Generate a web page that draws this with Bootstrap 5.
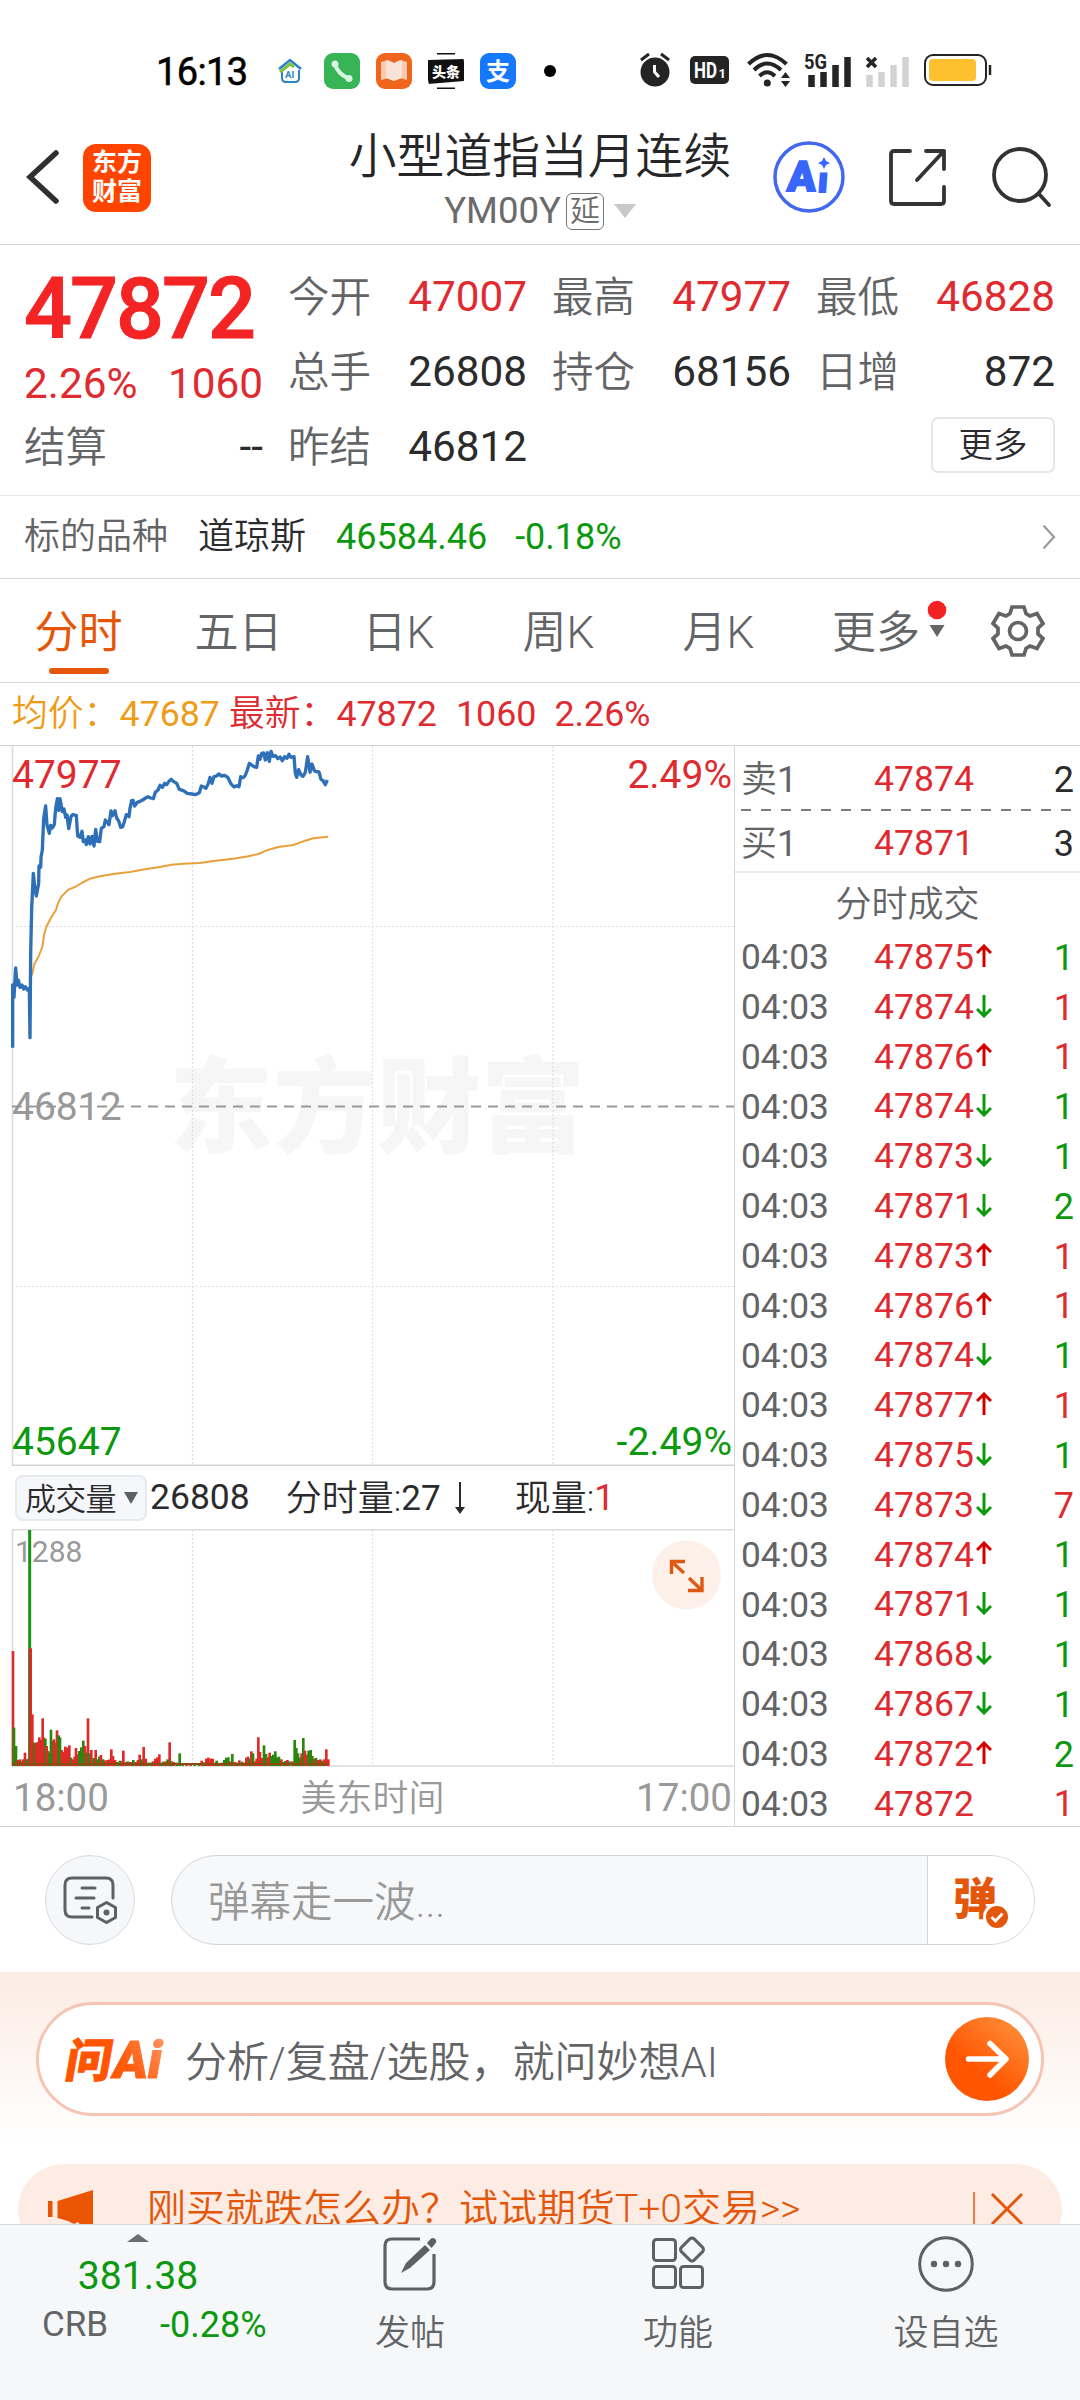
<!DOCTYPE html>
<html lang="zh-CN">
<head>
<meta charset="utf-8">
<meta name="viewport" content="width=device-width, initial-scale=1">
<title>小型道指当月连续</title>
<link href="https://cdn.jsdelivr.net/npm/bootstrap@5.3.0/dist/css/bootstrap.min.css" rel="stylesheet">
<style>
  :root{--up:#df2a30;--down:#0c980f;--ink:#2b2b2d;--sub:#636466;--orange:#e4570b;--rule:#dadada}
  body{width:1080px;height:2400px;overflow:hidden;background:#fff;color:var(--ink);font-family:Roboto,"Noto Sans CJK SC",sans-serif;line-height:1;font-size:36px}
  svg{display:block;flex:none}
  .up{color:var(--up)}.down{color:var(--down)}.sub{color:var(--sub)}
  .cn{font-weight:350;padding-top:2px}
  .nowrap{white-space:nowrap}
  .statusbar{height:140px;padding:2px 0 0 156px}
  .clock{font-size:38px;font-weight:400;color:#000;width:122px;letter-spacing:-.6px;-webkit-text-stroke:.5px #000}
  .app-tile{width:36px;height:36px;border-radius:9px;margin-right:16px;overflow:hidden}
  .topbar{height:105px;border-bottom:1px solid #d4d4d4;padding:0 26px 0 26px}
  .brand{width:68px;height:68px;border-radius:13px;background:#ff4400;color:#fff;font-weight:700;font-size:25px;line-height:29px;padding-top:4px;margin-left:23px}
  .title-col{width:450px;margin-left:164px}
  .title-main{font-size:47.8px;line-height:56px;margin-top:-11px;color:#262628;font-weight:350}
  .title-sub{font-size:36.5px;height:38px;color:#6b6b6b;margin-top:7px}
  .delay{font-size:30px;width:38px;height:37px;border:1.5px solid #777;border-radius:6px;margin-left:5px;font-weight:350}
  .quote{height:251px;padding:14px 24px 0;border-bottom:1px solid #e6e6e6;display:grid;grid-template-columns:repeat(4,239px);column-gap:25px;grid-template-rows:75px 75px 75px;font-size:42.3px}
  .q-cell{display:flex;justify-content:space-between;align-items:center;white-space:nowrap;padding-top:1px}
  .q-cell .cn{font-size:41.5px;color:var(--sub)}
  .q-price{font-size:84.5px;font-weight:500;color:#f42425;letter-spacing:-2px;padding-top:27px;-webkit-text-stroke:1px #f42425}
  .more-btn{width:124px;height:56px;border:2px solid #e6e6e6;border-radius:7px;font-size:34.5px;padding:0;color:var(--ink);line-height:48px;font-weight:350;margin-top:-5px}
  .under{height:83px;padding:0 24px;border-bottom:1px solid #d6d6da}
  .under .cn{padding-top:0}
  .tabs{height:104px;border-bottom:1px solid #d6d6da;font-size:44px}
  .tab-item{width:160px;height:103px;position:relative;color:var(--sub);font-weight:350;padding:5px 3px 0 0}
  .tab-item.on{color:var(--orange);font-weight:400}
  .tab-item.on::after{content:"";position:absolute;bottom:8px;left:49px;width:60px;height:6px;border-radius:3px;background:var(--orange)}
  .tab-more{position:absolute;right:13px;top:21px}
  .legend-row{height:63px;padding:2px 0 0 12px;border-bottom:1px solid #d2d2d2;white-space:pre;font-size:35.8px}
  .left-col{width:734px}
  .right-col{width:346px;border-left:1.5px solid #d8d8d8;height:1080px;padding:1px 6px 0 6px}
  .market{border-bottom:1px solid #d2d2d2;height:1081px}
  .volhead{height:63px;padding:1px 0 0 15px}
  .vol-select{width:132px;height:46px;border:2px solid #e6e9ee;border-radius:8px;background:#f6f7fa;font-size:31px;padding:2px 7px 0 8px;margin-right:3px;letter-spacing:-.7px}
  .axis{height:59px;font-size:38.5px;color:#999;padding:3px 2px 0 13px}
  .book{height:62px}
  .tick{height:49.8px}
  .t1{width:133px}.t2{width:99px;white-space:nowrap;font-size:35.6px}.tick .t1{font-size:35.3px}
  .tick svg{margin:-4px 0 0 3px}
  .danmu{height:145px;padding:0 45px}
  .round-btn{width:90px;height:90px;border:1.5px solid #d9dbde;background:#f6f7fa}
  .dm-field{width:864px;height:90px;border:1.5px solid #d3d5d9;margin-left:36px;overflow:hidden;background:#f6f8fa}
  .dm-text{font-size:41.5px;color:#999;padding:6px 0 0 36px;font-weight:350}
  .dm-side{width:107px;border-left:1.5px solid #d3d5d9;background:#fff}
  .dm-glyph{font-size:44px;font-weight:900;color:var(--orange);line-height:44px}
  .ask{height:192px;padding:30px 36px 0;background:linear-gradient(#fcece3,#fdf2ec 30%,#fff 88%)}
  .ask-pill{height:114px;border:3px solid #f6c4b3;border-radius:57px;background:#fff;padding:0 12px 0 27px}
  .ask-logo{width:97px;height:48px;overflow:visible}
  .ask-text{font-size:42px;line-height:52px;color:var(--sub);margin:7px 0 0 22px;font-weight:350}
  .tip-clip{height:60px;padding:0 18px;overflow:hidden}
  .tip{height:92px;border-radius:46px;background:#fcece4;color:var(--orange);padding:0 39px 0 30px}
  .tip-text{font-size:39px;margin:-2px 0 0 53px;font-weight:350}
  .footbar{height:176px;background:#f6f7f9;border-top:1.5px solid #d4d6d8}
  .foot-item{width:268px;padding-top:11px;font-size:35px;color:var(--sub)}
  .foot-item .cn{margin-top:22px;line-height:36px}
  .foot-index{width:276px;padding-top:9px}
</style>
</head>
<body>
<div class="statusbar d-flex align-items-start">
  <div class="clock" style="margin-top:51px">16:13</div>
  <div class="d-flex align-items-center" style="margin-top:51px">
    <svg width="24" height="26" viewBox="0 0 24 26" style="margin-right:22px"><path d="M4 12V20Q4 24 8 24H17Q21 24 21 20V12" fill="none" stroke="#2a83c4" stroke-width="2"/><path d="M1 11L12 2L23 11" fill="none" stroke="#2a7fc9" stroke-width="2.5"/><path d="M2 14L12 6L16 9" fill="none" stroke="#7cc242" stroke-width="3"/><text x="7" y="20" font-size="9.500" font-weight="700" fill="#2a83c4">AI</text></svg>
    <svg class="app-tile" viewBox="0 0 36 36"><rect width="36" height="36" fill="#37b456"/><path d="M11 11Q13 20 25 26" fill="none" stroke="#d9f5df" stroke-width="4"/><circle cx="11" cy="11" r="3.500" fill="#d9f5df"/><circle cx="25" cy="25.500" r="3.500" fill="#d9f5df"/></svg>
    <svg class="app-tile" viewBox="0 0 36 36"><rect width="36" height="36" fill="#f0651d"/><path d="M5 9L12 7L18 10L24 7L31 9V27L24 25L18 28L12 25L5 27Z" fill="#fbc9ab"/><path d="M10 7L18 10V28L10 25ZM26 7L18 10V28L26 25Z" fill="#f9e3d9"/></svg>
    <svg class="app-tile" viewBox="0 0 36 36"><rect width="36" height="36" fill="#fff"/><path d="M0 7L36 6V28L0 31ZM9 0H27V1.500H9ZM9 34.500H27V36H9Z" fill="#111"/><text x="4" y="24" font-size="14" font-weight="900" fill="#fff">头条</text></svg>
    <svg class="app-tile" viewBox="0 0 36 36" style="margin-right:28px"><rect width="36" height="36" fill="#1677ff"/><text x="6" y="26.500" font-size="24" font-weight="700" fill="#fff">支</text></svg>
    <svg width="12" height="12" viewBox="0 0 12 12"><circle cx="6" cy="6" r="6"/></svg>
  </div>
  <div class="d-flex align-items-center" style="margin:50px 0 0 84px">
    <svg width="30" height="36" viewBox="0 0 30 36" style="margin-right:20px"><circle cx="15" cy="20" r="14.500" fill="#242424"/><path d="M1 8L9 2M29 8L21 2" stroke="#242424" stroke-width="3"/><path d="M14.500 13V20L19 25" fill="none" stroke="#fff" stroke-width="3"/></svg>
    <svg width="39" height="28" viewBox="0 0 39 28" style="margin-right:18px"><rect width="39" height="28" rx="5" fill="#242424"/><text x="4" y="22" font-size="22" font-weight="700" fill="#fff" textLength="23" lengthAdjust="spacingAndGlyphs">HD</text><text x="28.500" y="22" font-size="13" font-weight="700" fill="#fff">1</text></svg>
    <svg width="44" height="36" viewBox="0 0 44 36" style="margin-right:14px"><g fill="none" stroke="#242424" stroke-width="4"><path d="M1.500 12Q20-6 39.500 12"/><path d="M7 18Q20 5 34 18"/><path d="M12.500 24Q20 16.500 28 24"/></g><circle cx="20.300" cy="31" r="3.500" fill="#242424"/><path d="M34 26L38.500 20L43 26ZM34 29H43L38.500 35Z" fill="#242424"/></svg>
    <svg width="46" height="36" viewBox="0 0 46 36" style="margin-right:15px;overflow:visible"><text x="-1" y="17" font-size="20" font-weight="700" fill="#242424" textLength="23" lengthAdjust="spacingAndGlyphs">5G</text><path d="M6.500 35V23M18.500 35V20M30.500 35V13M42.500 35V5" stroke="#242424" stroke-width="6.500"/></svg>
    <svg width="43" height="36" viewBox="0 0 43 36" style="margin-right:15px"><path d="M1 6L10 15M10 6L1 15" stroke="#242424" stroke-width="3.500"/><path d="M3.500 35V23M15.500 35V20M27.500 35V13M39.500 35V5" stroke="#d3d3d3" stroke-width="6.500"/></svg>
    <svg width="68" height="32" viewBox="0 0 68 32"><rect x="1" y="1" width="61" height="30" rx="8" fill="#fff" stroke="#242424" stroke-width="2"/><rect x="5" y="5" width="47" height="22" rx="4" fill="#fec02f"/><path d="M66 11V21" stroke="#242424" stroke-width="2.500"/></svg>
  </div>
</div>

<header class="topbar d-flex align-items-start">
  <svg width="34" height="60" viewBox="0 0 34 60" style="margin-top:7px"><path d="M30 6L4 30L30 54" fill="none" stroke="#303030" stroke-width="5.500" stroke-linecap="round"/></svg>
  <div class="brand text-center" style="margin-top:4px">东方<br>财富</div>
  <div class="title-col d-flex flex-column align-items-center">
    <div class="title-main nowrap">小型道指当月连续</div>
    <div class="title-sub d-flex align-items-center"><span>YM00Y</span><span class="delay d-flex align-items-center justify-content-center">延</span>
      <svg width="22" height="14" viewBox="0 0 22 14" style="margin-left:10px"><path d="M0 0H22L11 14Z" fill="#c8c8c8"/></svg></div>
  </div>
  <svg width="74" height="74" viewBox="0 0 74 74" style="margin-left:7px"><circle cx="37" cy="37" r="34" fill="#fff" stroke="#4268f0" stroke-width="3.500"/><g fill="#3866fb" stroke="#3866fb" stroke-width="1.800" font-weight="900"><text x="18" y="51" font-size="42" transform="skewX(-4)">A</text><text x="49" y="52" font-size="35" transform="skewX(-4)">ı</text></g><path d="M52 17L54 21L58 23L54 25L52 29L50 25L46 23L50 21Z" fill="#3866fb"/></svg>
  <svg width="62" height="62" viewBox="0 0 62 62" style="margin:7px 0 0 42px"><g fill="none" stroke="#333" stroke-width="3.800" stroke-linecap="round" stroke-linejoin="round"><path d="M22 4H6Q3 4 3 7V54Q3 57 6 57H53Q56 57 56 54V40"/><path d="M38 4H56V22M56 4L29 33"/></g></svg>
  <svg width="62" height="62" viewBox="0 0 62 62" style="margin:7px 0 0 41px"><g fill="none" stroke="#333" stroke-width="3.800" stroke-linecap="round"><circle cx="29" cy="28" r="26"/><path d="M48 47L58 58"/></g></svg>
</header>

<section class="quote">
  <div class="q-cell q-price">47872</div>
  <div class="q-cell"><span class="cn">今开</span><span class="up">47007</span></div>
  <div class="q-cell"><span class="cn">最高</span><span class="up">47977</span></div>
  <div class="q-cell"><span class="cn">最低</span><span class="up">46828</span></div>
  <div class="q-cell up" style="padding-top:26px"><span>2.26%</span><span>1060</span></div>
  <div class="q-cell"><span class="cn">总手</span><span>26808</span></div>
  <div class="q-cell"><span class="cn">持仓</span><span>68156</span></div>
  <div class="q-cell"><span class="cn">日增</span><span>872</span></div>
  <div class="q-cell"><span class="cn">结算</span><span>--</span></div>
  <div class="q-cell"><span class="cn">昨结</span><span>46812</span></div>
  <div></div>
  <div class="q-cell justify-content-end"><button class="btn more-btn">更多</button></div>
</section>

<section class="under d-flex align-items-center">
  <span class="cn sub">标的品种</span><span class="cn" style="margin-left:30px">道琼斯</span><span class="down" style="margin-left:30px">46584.46</span><span class="down" style="margin-left:28px">-0.18%</span>
  <svg class="ms-auto" width="14" height="26" viewBox="0 0 14 26"><path d="M1.500 1.500L12 13L1.500 24.500" fill="none" stroke="#999" stroke-width="2.200"/></svg>
</section>

<nav class="tabs d-flex align-items-center">
  <div class="tab-item on d-flex align-items-center justify-content-center">分时</div>
  <div class="tab-item d-flex align-items-center justify-content-center">五日</div>
  <div class="tab-item d-flex align-items-center justify-content-center">日K</div>
  <div class="tab-item d-flex align-items-center justify-content-center">周K</div>
  <div class="tab-item d-flex align-items-center justify-content-center">月K</div>
  <div class="tab-item d-flex align-items-center justify-content-center"><span style="margin-right:5px">更多</span>
    <svg class="tab-more" width="20" height="40" viewBox="0 0 20 40"><circle cx="10" cy="10" r="9.300" fill="#f32324"/><path d="M2.500 25H17.500L10 37Z" fill="#636466"/></svg></div>
  <svg width="54" height="54" viewBox="-27 -27 54 54" style="margin-left:31px"><path d="M-6-24H6L8-17.500L12-15L19-17.500L25-7.500L20-3V3L25 7.500L19 17.500L12 15L8 17.500L6 24H-6L-8 17.500L-12 15L-19 17.500L-25 7.500L-20 3V-3L-25-7.500L-19-17.500L-12-15L-8-17.500Z" fill="none" stroke="#636466" stroke-width="3.700"/><circle r="8.500" fill="none" stroke="#636466" stroke-width="3.700"/></svg>
</nav>

<div class="legend-row d-flex align-items-center"><span style="color:#ee9c18"><span class="cn">均价：</span>47687</span><span class="up" style="margin-left:9px"><span class="cn">最新：</span>47872</span><span class="up" style="margin-left:19px">1060</span><span class="up" style="margin-left:18px">2.26%</span></div>

<main class="market d-flex">
  <div class="left-col">
    <svg width="734" height="720" viewBox="0 746 734 720">
      <text x="169" y="1145" font-size="104" font-weight="900" fill="#f6f6f6">东方财富</text>
      <g stroke="#d4d4d4" stroke-width="1.200" stroke-dasharray="1.500 2.500"><path d="M192.500 746V1465M372.500 746V1465M553 746V1465M12 926.500H735M12 1286.500H735"/></g>
      <path d="M12.500 746V1466" stroke="#d9d9df" stroke-width="1.500"/>
      <path d="M12 1465.300H735" stroke="#d2d2d2" stroke-width="1.500"/>
      <path d="M12 1106.500H735" stroke="#999" stroke-width="2" stroke-dasharray="10 7"/>
      <g font-size="39">
        <text x="12" y="788" fill="#df2a30">47977</text>
        <text x="732" y="788" fill="#df2a30" text-anchor="end">2.49%</text>
        <text x="12" y="1120" fill="#999">46812</text>
        <text x="12" y="1455" fill="#0c980f">45647</text>
        <text x="732" y="1455" fill="#0c980f" text-anchor="end">-2.49%</text>
      </g>
      <g transform="translate(0 740) scale(.33333)" fill="none" stroke-linejoin="round">
        <path stroke="#e9a03c" stroke-width="6" d="M96 706L103 672L115 651L127 621L132 585L140 558L155 530L168 510L174 490L184 470L205 449L225 441L245 429L270 416L300 409L345 401L390 396L435 388L480 381L515 374L550 371L600 369L640 363L700 356L745 349L775 342L800 331L835 321L880 315L910 304L940 295L984 290"/>
        <path stroke="#2e70b8" stroke-width="10" d="M38 923V735L42 772L47 684L51 735L55 720L60 742L66 735L71 747L76 740L82 750L88 745L90 893L92 640L95 505L100 400L105 450L109 468L116 430L117 378L122 382L123 352L127 330L131 235L137 198L141 255L148 280L152 256L157 264L163 253L167 205L172 176L176 212L180 176L187 215L192 207L197 232L201 225L206 266L213 230L218 224L229 226L233 288L240 292L246 274L250 305L256 300L259 314L265 290L270 312L276 289L282 318L287 268L292 304L299 305L304 265L312 260L316 240L322 247L327 254L333 213L338 227L345 212L350 234L356 243L362 262L368 260L373 245L379 224L387 230L390 205L395 182L399 181L404 198L412 187L420 184L428 180L437 174L444 170L452 174L460 176L466 157L474 150L480 136L487 142L494 130L500 134L507 124L514 118L520 124L530 130L538 148L550 152L562 160L576 162L586 164L598 158L604 138L612 141L618 145L625 130L630 112L636 130L642 110L650 108L656 102L665 108L674 106L684 113L692 130L702 141L710 137L717 140L722 110L729 113L735 108L742 90L748 70L755 75L762 80L770 82L775 48L780 58L785 40L791 39L796 60L802 38L808 64L813 34L819 49L827 47L833 56L840 51L847 62L854 50L861 55L867 43L873 52L882 50L886 100L890 112L896 89L903 105L909 109L916 97L923 50L930 97L936 72L943 92L950 95L957 96L963 118L969 122L976 134L982 120"/>
      </g>
    </svg>
    <div class="volhead d-flex align-items-center">
      <span class="vol-select d-flex align-items-center justify-content-between cn">成交量<svg width="14" height="12" viewBox="0 0 14 12" style="margin-top:-2px"><path d="M0 0H14L7 12Z" fill="#5f6063"/></svg></span><span style="font-size:35.5px">26808</span><span class="cn" style="margin-left:36px">分时量:</span><span style="font-size:35px">27</span>
      <svg width="12" height="34" viewBox="0 0 12 34" style="margin-left:13px"><path d="M6 1V28" stroke="#2b2b2d" stroke-width="2"/><path d="M1 26H11L6 33Z" fill="#2b2b2d"/></svg>
      <span class="cn" style="margin-left:49px">现量:</span><span class="up">1</span>
    </div>
    <svg width="734" height="238" viewBox="0 1529 734 238">
      <path d="M12 1529.700H735" stroke="#ddd" stroke-width="1.500"/>
      <path d="M12.500 1529V1766" stroke="#d9d9df" stroke-width="1.500"/>
      <path d="M192.500 1530V1766M372.500 1530V1766M553 1530V1766" stroke="#d4d4d4" stroke-width="1.200" stroke-dasharray="1.500 2.500"/>
      <path d="M12 1766H735" stroke="#d9d9d9" stroke-width="1.500"/>
      <text x="15" y="1562" font-size="30" fill="#999">1288</text>
      <g transform="translate(0 1420) scale(.33333)" fill="none" id="bars"></g>
      <circle cx="686.500" cy="1575" r="34.500" fill="#fdf0e9"/>
      <g fill="none" stroke="#dd5a14" stroke-width="3.400"><path d="M671.500 1574V1561.500H685M672 1562L684 1573"/><path d="M702 1577V1590.500H688M701.500 1590L689 1578"/></g>
    </svg>
    <div class="axis d-flex align-items-center justify-content-between"><span>18:00</span><span class="cn" style="font-size:36px">美东时间</span><span>17:00</span></div>
  </div>
  <aside class="right-col">
    <div class="book d-flex align-items-center" style="padding-top:3px"><span class="t1 sub"><span class="cn">卖</span>1</span><span class="t2 up">47874</span><span class="ms-auto">2</span></div>
    <svg width="332" height="2" viewBox="0 0 332 2"><path d="M0 1H332" stroke="#7b7b7b" stroke-width="2" stroke-dasharray="10 10"/></svg>
    <div class="book d-flex align-items-center" style="padding-top:3px"><span class="t1 sub"><span class="cn">买</span>1</span><span class="t2 up">47871</span><span class="ms-auto">3</span></div>
    <div style="height:2px;background:#e9e9e9;margin:-2px -6px 0 -6px"></div>
    <div class="cn sub text-center" style="height:60px;line-height:60px">分时成交</div>
    <div id="ticks"></div>
  </aside>
</main>

<section class="danmu d-flex align-items-center">
  <div class="round-btn rounded-circle d-flex align-items-center justify-content-center">
    <svg width="56" height="50" viewBox="0 0 56 50"><g fill="none" stroke="#5f6063" stroke-width="3" stroke-linecap="round"><path d="M30 42H10Q3 42 3 35V10Q3 3 10 3H44Q51 3 51 10V23"/><path d="M20 13H33M14 23H32M20 33H27"/><path d="M45 29L54 34V44L45 49L36 44V34Z" transform="translate(-.5 -1.500)" stroke-linejoin="round"/></g><circle cx="44.500" cy="37.500" r="3" fill="#5f6063"/></svg>
  </div>
  <div class="dm-field rounded-pill d-flex align-items-stretch">
    <div class="dm-text flex-grow-1 d-flex align-items-center">弹幕走一波...</div>
    <div class="dm-side d-flex align-items-center position-relative">
      <span class="dm-glyph" style="margin-left:25px">弹</span>
      <svg class="position-absolute" style="left:55px;top:47px" width="28" height="28" viewBox="0 0 28 28"><circle cx="14" cy="14" r="12.500" fill="#e4570b" stroke="#fff" stroke-width="3"/><path d="M8.500 14L12.500 18L19.500 10.500" fill="none" stroke="#fff" stroke-width="2.800"/></svg>
    </div>
  </div>
</section>

<section class="ask">
  <div class="ask-pill d-flex align-items-center">
    <svg class="ask-logo" viewBox="0 0 97 48"><defs><linearGradient id="go" x1="0" y1="1" x2=".8" y2="0"><stop offset=".4" stop-color="#ff5500"/><stop offset="1" stop-color="#ff8e3a"/></linearGradient><linearGradient id="ai" x1="0" y1="1" x2="1" y2="0"><stop offset=".35" stop-color="#ff5a08"/><stop offset="1" stop-color="#ff9d72"/></linearGradient></defs>
      <g transform="skewX(-10)" font-weight="900"><text x="5" y="42" font-size="46" fill="#ff5500" stroke="#ff5500" stroke-width="1">问</text>
      <text x="52" y="43" font-size="52" fill="url(#ai)" stroke="url(#ai)" stroke-width="1" textLength="49" lengthAdjust="spacingAndGlyphs">Ai</text></g></svg>
    <span class="ask-text nowrap">分析/复盘/选股，就问妙想AI</span>
    <svg class="ms-auto" width="84" height="84" viewBox="0 0 84 84"><circle cx="42" cy="42" r="42" fill="url(#go)"/><path d="M23.500 42H60M45 26.500L61 42L45 58" fill="none" stroke="#fff" stroke-width="5.500" stroke-linecap="round" stroke-linejoin="round"/></svg>
  </div>
</section>

<div class="tip-clip">
  <div class="tip d-flex align-items-center">
    <svg width="46" height="40" viewBox="0 0 46 40"><path d="M0 11H4.500V27H0ZM9.500 11L45 0V40H36L30 32L26 34L20 31L9.500 28Z" fill="#ea5504"/></svg>
    <span class="tip-text nowrap">刚买就跌怎么办？试试期货T+0交易&gt;&gt;</span>
    <svg class="ms-auto" width="50" height="40" viewBox="0 0 50 40"><path d="M1 2V38" stroke="#e4570b" stroke-width="1.500"/><path d="M19 4L49 34M49 4L19 34" stroke="#e4570b" stroke-width="3"/></svg>
  </div>
</div>

<footer class="footbar d-flex">
  <div class="foot-index d-flex flex-column align-items-center">
    <svg width="22" height="8" viewBox="0 0 22 8"><path d="M0 8L11 0L22 8Z" fill="#6b6c70"/></svg>
    <div class="down" style="font-size:39.200px;margin-top:15px">381.38</div>
    <div class="d-flex w-100" style="margin-top:11px;padding-left:42px"><span class="sub" style="font-size:35px;width:118px">CRB</span><span class="down">-0.28%</span></div>
  </div>
  <div class="foot-item d-flex flex-column align-items-center">
    <svg width="56" height="56" viewBox="0 0 56 56"><path d="M38 3H10Q3 3 3 10V46Q3 53 10 53H45Q52 53 52 46V18" fill="none" stroke="#5f6063" stroke-width="3.200"/><path d="M19 37L24 27L43 9L48 14L28 32ZM45 7L49 2.500Q52 1 54 4Q55 6 53 8L49.500 12Z" fill="#5f6063"/></svg>
    <span class="cn">发帖</span>
  </div>
  <div class="foot-item d-flex flex-column align-items-center">
    <svg width="56" height="56" viewBox="0 0 56 56"><g fill="none" stroke="#5f6063" stroke-width="3"><rect x="3.500" y="3.500" width="22" height="21" rx="3"/><rect x="3.500" y="30.500" width="22" height="21" rx="3"/><rect x="30.500" y="30.500" width="22" height="21" rx="3"/><rect x="33" y="4.500" width="18" height="18" rx="3" transform="rotate(45 42 13.500)"/></g></svg>
    <span class="cn">功能</span>
  </div>
  <div class="foot-item d-flex flex-column align-items-center">
    <svg width="56" height="56" viewBox="0 0 56 56"><circle cx="28" cy="28" r="26.300" fill="none" stroke="#5f6063" stroke-width="3"/><g fill="#5f6063"><circle cx="16" cy="28" r="3.200"/><circle cx="28" cy="28" r="3.200"/><circle cx="40" cy="28" r="3.200"/></g></svg>
    <span class="cn">设自选</span>
  </div>
</footer>

<script>
  // price, direction, quantity, quantity side
  const trades = [
    [47875,'u',1,'down'],[47874,'d',1,'up'],[47876,'u',1,'up'],[47874,'d',1,'down'],[47873,'d',1,'down'],[47871,'d',2,'down'],
    [47873,'u',1,'up'],[47876,'u',1,'up'],[47874,'d',1,'down'],[47877,'u',1,'up'],[47875,'d',1,'down'],[47873,'d',7,'up'],
    [47874,'u',1,'down'],[47871,'d',1,'down'],[47868,'d',1,'down'],[47867,'d',1,'down'],[47872,'u',2,'down'],[47872,'',1,'up']];
  const arrow = d => d ? `<svg width="16" height="24" viewBox="0 0 16 24"><path d="${d==='u'?'M8 23V2M1 9L8 2L15 9':'M8 1V22M1 15L8 22L15 15'}" fill="none" stroke="${d==='u'?'#d40000':'#0c980f'}" stroke-width="3"/></svg>` : '';
  document.getElementById('ticks').innerHTML = trades.map(t =>
    `<div class="tick d-flex align-items-center"><span class="t1 sub">04:03</span><span class="t2 up">${t[0]}</span>${arrow(t[1])}<span class="ms-auto ${t[3]}">${t[2]}</span></div>`).join('');

  // per-minute volume: x, height, side
  const R='#e02a28', G='#28880d';
  const bars = [[42,115,G],[48,60,G],[54,18,R],[60,20,R],[66,14,G],[70,20,R],[75,40,R],[80,20,G],[86,22,R],
    [97,155,R],[100,70,R],[104,70,G],[109,68,R],[113,72,R],[118,86,R],[123,78,R],[128,143,R],[132,85,R],[136,82,G],[140,60,R],[144,45,R],[149,40,G],[153,109,G],[158,75,G],[162,80,R],[166,70,R],[171,107,R],[176,92,G],[180,86,G],[185,48,R],[190,42,R],[196,58,R],[202,55,R],[208,62,R],[213,25,G],[218,20,R],[224,28,R],[228,54,R],[233,35,R],[238,45,G],[244,56,G],[250,76,G],[255,60,R],[259,40,G],[264,143,R],[269,38,G],[274,48,R],[281,24,G],[287,48,R],[293,20,G],[298,28,G],[303,33,R],[309,20,G],[316,17,R],[323,18,R],[329,20,R],[334,50,R],[339,30,R],[345,18,R],[352,12,G],[360,16,G],[365,14,R],[370,46,R],[377,12,R],[384,14,G],[392,12,R],[400,18,G],[408,12,R],[414,18,R],[419,34,R],[425,20,G],[431,57,R],[437,22,R],[444,10,G],[452,10,G],[459,14,R],[466,22,R],[472,26,R],[478,35,R],[484,10,G],[490,13,G],[497,14,R],[503,20,G],[509,71,R],[515,14,G],[522,12,R],[531,10,G],[539,38,G],[548,8,G],[560,8,R],[572,9,R],[584,8,G],[597,8,G],[605,16,R],[612,11,G],[619,22,R],[625,25,R],[632,22,R],[638,22,R],[644,10,R],[650,16,G],[658,8,R],[666,10,R],[673,18,G],[679,25,G],[685,26,G],[691,14,R],[697,36,G],[704,12,R],[712,10,G],[718,17,R],[726,13,G],[733,10,R],[739,25,R],[744,28,R],[749,22,G],[754,44,R],[759,38,G],[765,14,R],[770,22,R],[775,86,R],[780,42,R],[785,24,R],[792,62,G],[798,36,G],[803,26,R],[809,40,R],[814,30,G],[820,34,G],[826,44,G],[831,26,G],[837,28,G],[844,20,R],[850,12,G],[856,15,G],[862,18,R],[868,14,G],[877,14,R],[884,78,G],[889,54,G],[894,38,G],[900,25,G],[905,38,R],[910,84,G],[915,46,R],[921,34,R],[926,46,G],[932,48,G],[937,30,G],[943,22,R],[948,24,G],[955,18,R],[961,20,R],[967,16,G],[973,20,R],[979,50,R],[985,20,R]];
  const line = (x,h,c,w) => `<path d="M${x} 1038V${1038-h}" stroke="${c}" stroke-width="${w}"/>`;
  document.getElementById('bars').innerHTML = line(39,345,R,8) + bars.map(b => line(b[0],b[1],b[2],8)).join('')
    + line(89,708,'#169414',9) + line(91,353,R,10) + line(88,340,'#85561c',4)
    + '<path d="M36 1032H985" stroke="#8a4a12" stroke-width="6"/>';
</script>
<script src="https://cdn.jsdelivr.net/npm/bootstrap@5.3.0/dist/js/bootstrap.bundle.min.js"></script>
</body>
</html>
